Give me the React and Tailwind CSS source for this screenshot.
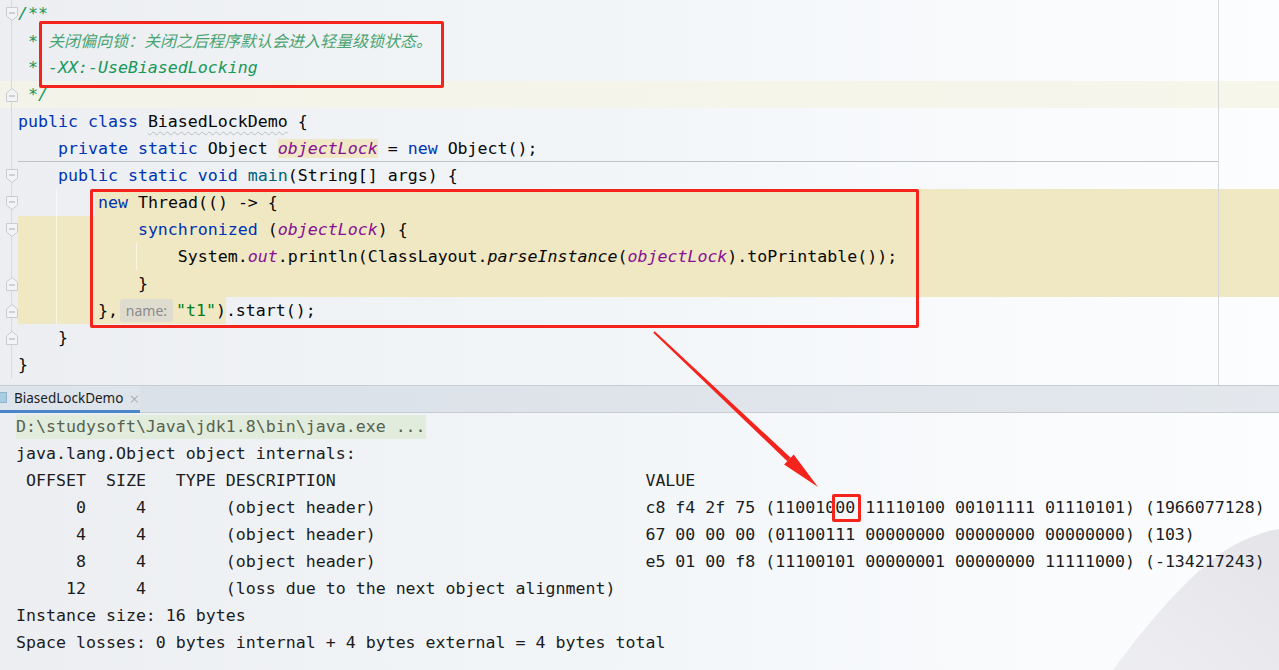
import React from 'react'

const mono = { fontFamily: '"DejaVu Sans Mono", "Liberation Mono", monospace' }

function Fold({ dir }) {
    // folding marker in the gutter
    return (
        <svg className="absolute left-[6px] top-[7px]" width="12" height="14" viewBox="0 0 12 14">
            {dir === 'down' ? (
                <path d="M0.5 0.5 H11.5 V9 L6 13.5 L0.5 9 Z" fill="#f1f3f5" stroke="#c9cdd2" />
            ) : (
                <path d="M0.5 13.5 H11.5 V5 L6 0.5 L0.5 5 Z" fill="#f1f3f5" stroke="#c9cdd2" />
            )}
            <line x1="3" x2="9" y1={dir === 'down' ? 6 : 8} y2={dir === 'down' ? 6 : 8} stroke="#a9adb3" />
        </svg>
    )
}

function Row({ fold, rowClass = '', codeClass = '', children }) {
    return (
        <div className={`flex h-[27px] ${rowClass}`}>
            <div className="relative w-[12px] h-full border-r border-[#d6d9de] shrink-0">
                {fold && <Fold dir={fold} />}
            </div>
            <div className="w-[6px] shrink-0"></div>
            <div className={`flex-1 h-full whitespace-pre leading-[27px] ${codeClass}`}>{children}</div>
        </div>
    )
}

const kw = 'text-[#0033b3]'
const purple = 'text-[#871094] italic'
const doc = 'text-[#17985a] italic'

function App() {
    const header = ' OFFSET  SIZE   TYPE DESCRIPTION                               VALUE'
    const rows = [
        '      0     4        (object header)                           c8 f4 2f 75 (11001000 11110100 00101111 01110101) (1966077128)',
        '      4     4        (object header)                           67 00 00 00 (01100111 00000000 00000000 00000000) (103)',
        '      8     4        (object header)                           e5 01 00 f8 (11100101 00000001 00000000 11111000) (-134217243)',
        '     12     4        (loss due to the next object alignment)',
    ]

    return (
        <div className="relative w-[1279px] h-[670px] overflow-hidden text-[16.6px] text-[#080808] bg-gradient-to-r from-[#eceef2] via-[#f3f6f9] to-[#fcfdfe]" style={mono}>

            {/* wallpaper shape bottom right */}
            <svg className="absolute right-0 bottom-0 pointer-events-none" width="180" height="160" viewBox="0 0 180 160">
                <defs>
                    <linearGradient id="wp" x1="0" y1="1" x2="1" y2="0">
                        <stop offset="0" stopColor="#ebebef" />
                        <stop offset="1" stopColor="#dedee4" />
                    </linearGradient>
                </defs>
                <path d="M14 160 C 55 105, 105 45, 150 28 C 163 23, 172 20, 180 19 L180 160 Z" fill="url(#wp)" opacity="0.8" />
            </svg>

            {/* Editor */}
            <div className="relative h-[385px]">
                <Row fold="down"><span className={doc}>/**</span></Row>
                <Row>
                    <span className={doc}> * </span>
                    <span className="text-[#4aa472] italic text-[16px]" style={{ fontFamily: '"Noto Sans CJK SC", sans-serif' }}>关闭偏向锁：关闭之后程序默认会进入轻量级锁状态。</span>
                </Row>
                <Row><span className={doc}> * -XX:-UseBiasedLocking</span></Row>
                <Row fold="up" rowClass="bg-[#f5f4e6]/80"><span className={doc}> */</span></Row>
                <Row>
                    <span className={kw}>public class </span>
                    <span className="underline decoration-wavy decoration-[#b9bcc0] decoration-1 underline-offset-4">BiasedLockDemo</span> {'{'}
                </Row>
                <Row>
                    <div className="w-[1200px] h-[27px] border-b border-[#bfc3c8]">
                        {'    '}<span className={kw}>private static </span>Object <span className={`${purple} bg-[#efe7c6]`}>objectLock</span> = <span className={kw}>new</span> Object();
                    </div>
                </Row>
                <Row fold="down">
                    {'    '}<span className={kw}>public static void </span><span className="text-[#00627a]">main</span>(String[] args) {'{'}
                </Row>
                <Row fold="down" codeClass="flex">
                    <span className="w-[77px] shrink-0"></span>
                    <span className="flex-1 pl-[3px] bg-[#f0e7c3]">
                        <span className={kw}>new</span> Thread(() -&gt; {'{'}
                    </span>
                </Row>
                <Row fold="down" codeClass="bg-[#f0e7c3]">
                    {'            '}<span className={kw}>synchronized</span> (<span className={purple}>objectLock</span>) {'{'}
                </Row>
                <Row codeClass="bg-[#f0e7c3]">
                    {'                '}System.<span className={purple}>out</span>.println(ClassLayout.<span className="italic">parseInstance</span>(<span className={purple}>objectLock</span>).toPrintable());
                </Row>
                <Row fold="up" codeClass="bg-[#f0e7c3]">
                    {'            }'}
                </Row>
                <Row fold="up" codeClass="flex items-center">
                    <span className="bg-[#f0e7c3] h-[27px] flex items-center">
                        {'        },'}
                        <span className="inline-flex items-center justify-center w-[53px] h-[23px] ml-[2px] mr-[3px] rounded-[3px] bg-[#dedbcf] text-[#8b8b8b] text-[14px]" style={{ fontFamily: '"Noto Sans", sans-serif' }}>name:</span>
                        <span className="text-[#067d17]">"t1"</span>)
                    </span>
                    <span>.start();</span>
                </Row>
                <Row fold="up">{'    }'}</Row>
                <Row>{'}'}</Row>

                {/* right margin and indent guides */}
                <div className="absolute left-[1218px] top-0 w-px h-[385px] bg-[#d4d7db]"></div>
                <div className="absolute left-[56px] top-[189px] w-px h-[135px] bg-white/60"></div>
                <div className="absolute left-[136px] top-[243px] w-px h-[27px] bg-white/60"></div>
            </div>

            {/* Tab bar */}
            <div className="relative flex h-[28px] border-t border-[#c8cdd4] bg-gradient-to-r from-[#d9e0e8] to-[#e4e8ed]" style={{ fontFamily: '"Noto Sans", sans-serif' }}>
                <div className="flex items-center w-[140px] h-full border-b-[3px] border-[#4a86c8] bg-[#e1e6ec]/60">
                    <div className="w-[7px] h-[11px] bg-[#a8cce2] border border-l-0 border-[#8fb4cc] -mt-[1px]"></div>
                    <span className="ml-[7px] text-[13.5px] text-[#1b1b1b]">BiasedLockDemo</span>
                    <span className="ml-[6px] text-[17px] leading-none font-light text-[#a3a8ae]">×</span>
                </div>
                <div className="flex-1 h-full border-b border-[#c8cdd4]"></div>
            </div>

            {/* Console */}
            <div className="relative pl-[16px] text-[#1c1c1c] whitespace-pre">
                <div className="h-[27px] flex items-center">
                    <span className="block h-[24px] leading-[24px] bg-[#e2ecdc] text-[#57624f]">D:\studysoft\Java\jdk1.8\bin\java.exe ...</span>
                </div>
                <div className="h-[27px] leading-[27px]">java.lang.Object object internals:</div>
                <div className="h-[27px] leading-[27px]">{header}</div>
                {rows.map((r, i) => (
                    <div key={i} className="h-[27px] leading-[27px]">{r}</div>
                ))}
                <div className="h-[27px] leading-[27px]">Instance size: 16 bytes</div>
                <div className="h-[27px] leading-[27px]">Space losses: 0 bytes internal + 4 bytes external = 4 bytes total</div>
            </div>

            {/* annotations */}
            <div className="absolute left-[39px] top-[21px] w-[405px] h-[67px] border-[3px] border-[#f4231b] rounded-[2px]"></div>
            <div className="absolute left-[90px] top-[189px] w-[829px] h-[139px] border-[3px] border-[#f4231b] rounded-[2px]"></div>
            <div className="absolute left-[832px] top-[494px] w-[29px] h-[28px] border-[3px] border-[#f4231b] rounded-[2px]"></div>
            <svg className="absolute inset-0 pointer-events-none" width="1279" height="670">
                <polygon points="653.3,332.7 654.7,331.3 790.7,457.7 787.3,461.3" fill="#f4231b" />
                <polygon points="784.1,464.6 793.7,454.4 818,487" fill="#f4231b" />
            </svg>
        </div>
    )
}

export default App
